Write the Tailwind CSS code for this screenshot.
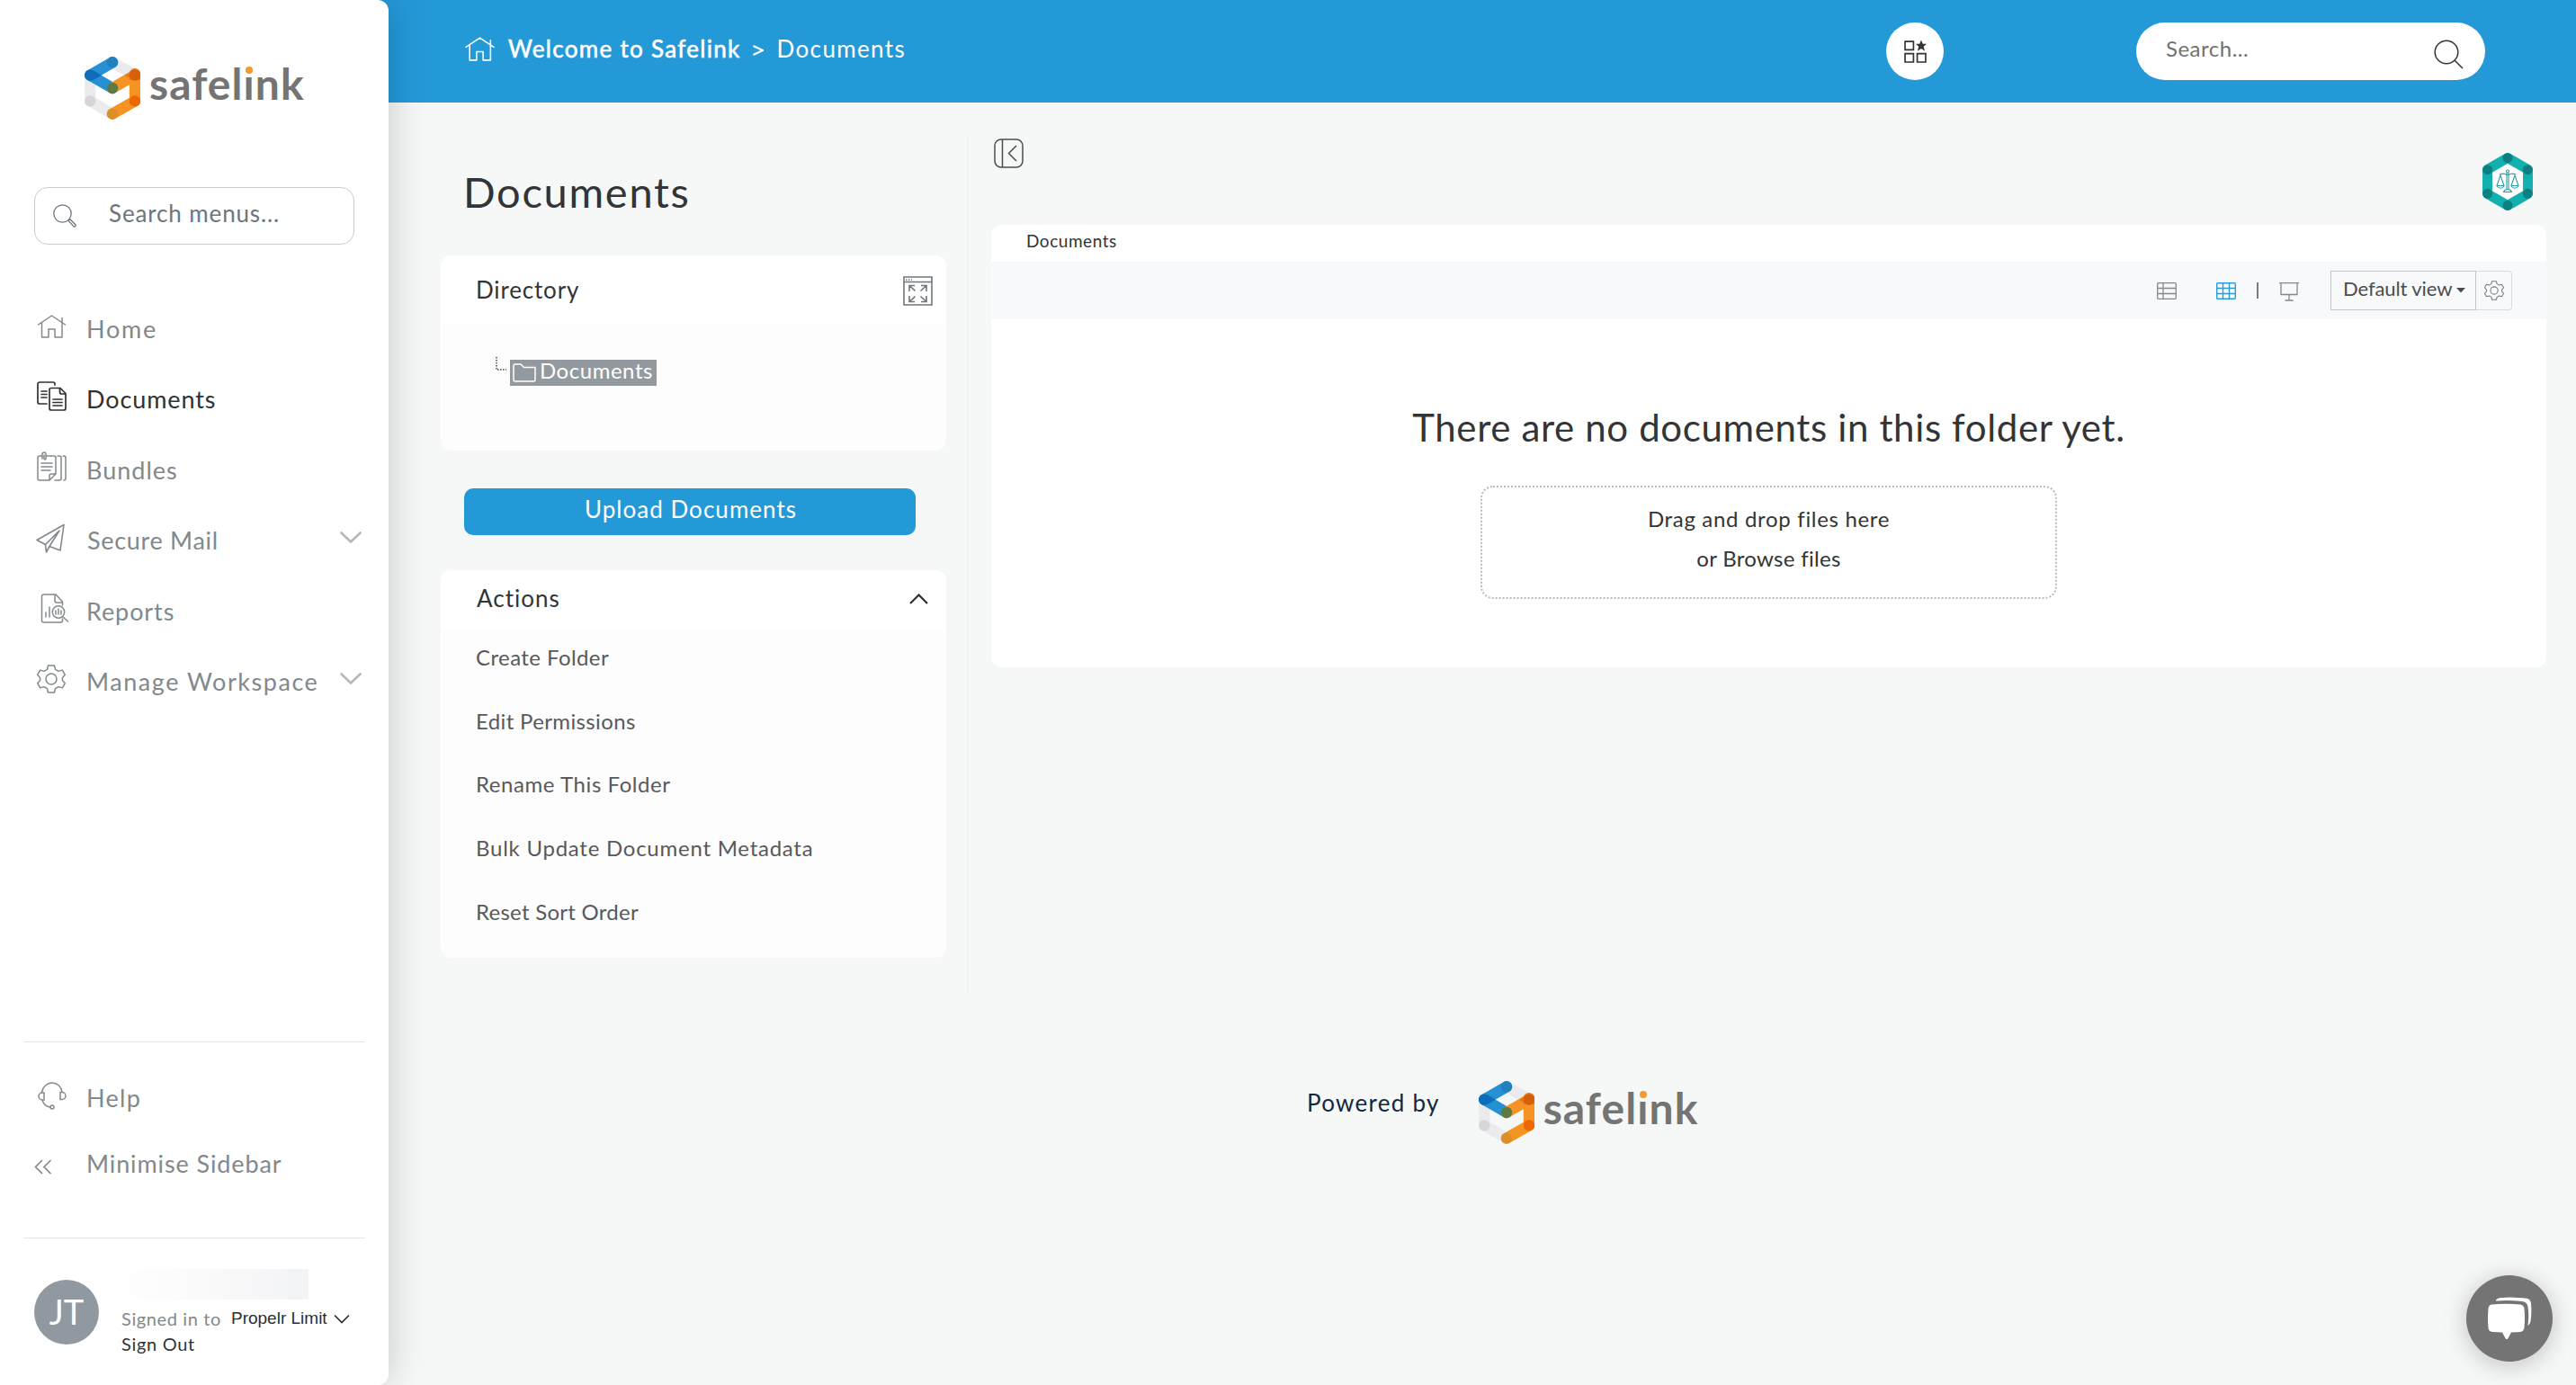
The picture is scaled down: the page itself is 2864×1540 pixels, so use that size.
<!DOCTYPE html>
<html lang="en">
<head>
<meta charset="utf-8">
<title>Documents - Safelink</title>
<script src="https://cdn.jsdelivr.net/npm/@tailwindcss/browser@4"></script>
</head>
<body class="flex h-[1540px] w-[2864px] overflow-hidden bg-[#f6f8f8] font-['Lato',sans-serif] text-[#333436]">
<svg class="hidden">
  <symbol id="mark" viewBox="0 0 62 70">
    <g fill="none" stroke-width="12.4" stroke-linecap="round">
      <g stroke="#ebebed"><path d="M31 6.3L56 20.6"/><path d="M6.3 20.6V49.4"/><path d="M6.3 49.4L31 63.6"/></g>
      <path d="M31 6.3L6.3 20.6L31 35" stroke="#2590d3" stroke-linejoin="round"/>
      <path d="M31 35L56 20.6V49.4L31 63.6" stroke="#f59425" stroke-linejoin="round"/>
    </g>
    <circle cx="31" cy="6.3" r="6.2" fill="#2280bc"/>
    <path d="M0.4 18.5a6.2 6.2 0 0 1 5.9-4.1c3 0 8 3.500 12.500 6.200c-4 2.500-9 6.200-12.500 6.200a6.200 6.200 0 0 1-5.900-8.300z" fill="#0d6db8"/>
    <circle cx="31" cy="35" r="6.2" fill="#5c7a42"/>
    <path d="M50 17.500a6.300 6.300 0 0 1 12.200 3.100V26l-12.400 0V24l-5-3z" fill="#e87a16"/>
    <circle cx="56" cy="20.600" r="6.200" fill="#d65f08"/>
    <circle cx="56" cy="49.400" r="6.200" fill="#ed6800"/>
    <circle cx="31" cy="63.600" r="6.200" fill="#dd8f27"/>
    <circle cx="6.300" cy="49.400" r="6.200" fill="#d6d6d8"/>
  </symbol>
  <symbol id="house" viewBox="0 0 32 26">
    <path d="M1 11L16 1L31 11M5 9V25H12.500V16H19.500V25H27.500V3.500" fill="none" stroke="currentColor" stroke-width="1.500" stroke-linejoin="round" stroke-linecap="round"/>
  </symbol>
  <symbol id="gear" viewBox="0 0 32 32">
    <g fill="none" stroke="currentColor" stroke-width="1.500" stroke-linejoin="round">
      <path d="M12.500 1h7l1 4.300l3.600 2.100l4.200-1.300l3 5.200l-2 2.200a3.500 3.500 0 0 0 0 5l2 2.200l-3 5.200l-4.200-1.300l-3.600 2.100l-1 4.300h-7l-1-4.300l-3.600-2.100l-4.200 1.300l-3-5.200l2-2.200a3.500 3.500 0 0 0 0-5l-2-2.200l3-5.200l4.200 1.300l3.600-2.100z"/>
      <circle cx="16" cy="16" r="6"/>
    </g>
  </symbol>
</svg>

<aside class="relative z-10 flex h-full w-[432px] shrink-0 flex-col rounded-r-[12px] bg-white shadow-[0_0_44px_rgba(0,0,0,0.2)]">
  <div class="mt-[63px] flex h-[70px] pl-[94px]">
    <svg class="h-[70px] w-[62px]"><use href="#mark"/></svg>
    <span class="relative ml-[10px] h-[60px] text-[48px] leading-[60px] font-bold tracking-[1.08px] text-[#747474]">safel&#305;nk<i class="absolute top-[11px] left-[107px] size-[8px] rounded-full bg-[#f29a2e]"></i></span>
  </div>

  <div class="mt-[75px] ml-[38px] flex h-16 w-[356px] items-center rounded-[15px] border border-[#c9cccf] pl-5 text-[#6c757d]">
    <svg class="mt-[-1px] size-[26px]" viewBox="0 0 26 26" fill="none" stroke="currentColor" stroke-width="1.300"><circle cx="10.500" cy="10.500" r="9.700"/><path d="M17 18.500l1.800-1.800l6 6a1.300 1.300 0 0 1-1.900 1.900z"/></svg>
    <span class="mb-[5px] ml-[36px] text-[26px] tracking-[0.87px]">Search menus...</span>
  </div>

  <nav class="mt-[55px] flex flex-col text-[27px] text-[#82898c]">
    <a class="flex h-[78.400px] items-center pl-[41px]"><svg class="mb-[6px] h-[26px] w-[33px]"><use href="#house"/></svg><span class="ml-[22px] tracking-[1.800px]">Home</span></a>
    <a class="flex h-[78.400px] items-center pl-[41px] text-[#2f3133]"><svg class="mb-[8px] size-[33px]" viewBox="0 0 33 33" fill="none" stroke="currentColor" stroke-width="1.700" stroke-linejoin="round" stroke-linecap="round"><path d="M20 4V3a2 2 0 0 0-2-2H3a2 2 0 0 0-2 2V23a2 2 0 0 0 2 2H11M5 11h6M5 14.500h6M5 18h6M16 7.500H26l6 6V30a2 2 0 0 1-2 2H16a2 2 0 0 1-2-2V9.500a2 2 0 0 1 2-2zM25.500 8v4a2 2 0 0 0 2 2H32M18 20h10M18 23.500h10M18 27h10"/></svg><span class="ml-[22px] tracking-[0.900px]">Documents</span></a>
    <a class="flex h-[78.400px] items-center pl-[41px]"><svg class="mb-[8px] size-[33px]" viewBox="0 0 33 33" fill="none" stroke="currentColor" stroke-width="1.500" stroke-linejoin="round" stroke-linecap="round"><path d="M5 5H3a2 2 0 0 0-2 2V30a2 2 0 0 0 2 2H14l7-7V7a2 2 0 0 0-2-2H10M14 32V27a2 2 0 0 1 2-2h5M6 8V3a2 2 0 0 1 4 0V8a1 1 0 0 1-2 0V4M5 13h12M5 17h12M5 21h10M23 5h2a2 2 0 0 1 2 2V30a2 2 0 0 1-2 2H20M29 5h1a2 2 0 0 1 2 2V30a2 2 0 0 1-2 2"/></svg><span class="ml-[22px] tracking-[1px]">Bundles</span></a>
    <a class="flex h-[78.400px] items-center pl-[40px]"><svg class="mb-[6px] size-[33px]" viewBox="0 0 33 33" fill="none" stroke="currentColor" stroke-width="1.600" stroke-linejoin="round"><path d="M1 18.500L31 1.500L27 30L15 25.500L26 8L10.500 23.500zM10.500 23.500L11.500 32L15 25.500"/></svg><span class="ml-[24px] tracking-[0.700px]">Secure Mail</span><svg class="mb-[6px] ml-auto mr-[30px] h-[14px] w-[24px]" viewBox="0 0 24 14" fill="none" stroke="#b4b8bb" stroke-width="2.600" stroke-linecap="round"><path d="M1.500 1.500L12 11.500L22.500 1.500"/></svg></a>
    <a class="flex h-[78.400px] items-center pl-[45px]"><svg class="mb-[7px] h-[33px] w-[32px]" viewBox="0 0 32 33" fill="none" stroke="currentColor" stroke-width="1.500" stroke-linejoin="round" stroke-linecap="round"><path d="M24.500 13V9L17 1H3.500a2 2 0 0 0-2 2V30a2 2 0 0 0 2 2H22.500a2 2 0 0 0 2-2V28M16 1.500V8a2 2 0 0 0 2 2h6M6 21v5M10 15v11M17 19v4M20 17v6M23 19v4M25 26l5.500 5"/><circle cx="20" cy="20.500" r="6.700"/></svg><span class="ml-[19px] tracking-[0.900px]">Reports</span></a>
    <a class="flex h-[78.400px] items-center pl-[41px]"><svg class="mb-[6px] size-[32px]"><use href="#gear"/></svg><span class="ml-[23px] tracking-[1.550px] whitespace-nowrap">Manage Workspace</span><svg class="mb-[6px] ml-auto mr-[30px] h-[14px] w-[24px]" viewBox="0 0 24 14" fill="none" stroke="#b4b8bb" stroke-width="2.600" stroke-linecap="round"><path d="M1.500 1.500L12 11.500L22.500 1.500"/></svg></a>
  </nav>

  <div class="mx-[26px] mt-auto h-[219px] border-y border-[#e3e5e7] pt-[26px] text-[27px] text-[#82898c]">
    <a class="flex h-[73px] items-center pl-[15px]"><svg class="mb-[7px] h-[31px] w-[33px]" viewBox="0 0 33 31" fill="none" stroke="currentColor" stroke-width="1.500" stroke-linecap="round"><path d="M5.500 11C7 5 11.500 1 17 1S27 5 28 11M8 12v8H6a4 4 0 0 1 0-8zM26 11.500v8h2a4 4 0 0 0 0-8zM6 20.500c1.500 4 4.500 7 8.500 7.500"/><circle cx="17" cy="28" r="2"/></svg><span class="ml-[22px] tracking-[1.300px]">Help</span></a>
    <a class="flex h-[73px] items-center pl-[12px]"><svg class="mt-[6px] h-[17px] w-[20px]" viewBox="0 0 20 17" fill="none" stroke="currentColor" stroke-width="1.700"><path d="M9 1L1.500 8.500L9 16M18.500 1L11 8.500L18.500 16"/></svg><span class="ml-[38px] tracking-[0.900px]">Minimise Sidebar</span></a>
  </div>

  <div class="flex h-[163px] shrink-0 pl-[38px]">
    <div class="mt-[46px] flex size-[72px] items-center justify-center rounded-full bg-[#9199a0] pb-[2px] text-[38px] text-white">JT</div>
    <div class="mt-[34px] ml-[13px]">
      <div class="h-[34px] w-[220px] bg-linear-to-r from-white via-[#fafafb] to-[#f2f3f5]"></div>
      <div class="mt-[7px] flex h-7 items-center pl-[12px] text-[20px] tracking-[0.620px] text-[#82898c]">Signed in to<span class="ml-[11px] w-[107px] overflow-hidden font-['Liberation_Sans',sans-serif] text-[19px] tracking-normal whitespace-nowrap text-[#2d2f31]">Propelr Limit</span><svg class="ml-[7px] h-[11px] w-[18px]" viewBox="0 0 18 11" fill="none" stroke="#2d2f31" stroke-width="1.700"><path d="M1 1.500L9 9.500L17 1.500"/></svg></div>
      <div class="flex h-7 items-center pl-[12px] text-[20px] tracking-[0.680px]">Sign Out</div>
    </div>
  </div>
</aside>

<div class="flex min-w-0 flex-1 flex-col">
  <header class="-ml-4 flex h-[114px] shrink-0 bg-[#2499d8] pt-[25px] pl-[101px] text-white">
    <div class="flex h-[59px] items-center text-[26px]">
      <svg class="h-[27px] w-[33px]"><use href="#house"/></svg>
      <span class="ml-[15px] [-webkit-text-stroke:0.6px_white] tracking-[1.300px]">Welcome to Safelink</span>
      <svg class="ml-[13px] mt-[2px] h-[12px] w-[12px]" viewBox="0 0 12 12" fill="none" stroke="white" stroke-width="2"><path d="M0.500 1L11 6L0.500 11"/></svg>
      <span class="ml-[15px] tracking-[1.370px]">Documents</span>
    </div>
    <div class="ml-auto flex size-16 items-center justify-center rounded-full bg-white text-[#303234]">
      <svg class="size-[25px]" viewBox="0 0 24 24" fill="none" stroke="currentColor" stroke-width="1.600"><path d="M1 1h9v9H1zM1 14h9v9H1zM14 14h9v9h-9z"/><path d="M18.200 -0.500l1.700 4h4.100l-3.200 2.900l1.300 4.900l-3.900-2.700l-3.900 2.700l1.300-4.900l-3.200-2.900h4.100z" fill="currentColor" stroke="none"/></svg>
    </div>
    <div class="mr-[101px] ml-[214px] flex h-16 w-[388px] justify-between rounded-full bg-white pr-[24px] pl-[33px]">
      <span class="pt-[14px] text-[24px] leading-[29px] tracking-[0.500px] text-[#6f7173]">Search...</span>
      <svg class="mt-[19px] size-[33px]" viewBox="0 0 33 33" fill="none" stroke="#333" stroke-width="1.500"><circle cx="14" cy="14" r="12.800"/><path d="M23 23L32 32"/></svg>
    </div>
  </header>

  <div class="flex h-[990px] pl-[58px]">
    <section class="w-[562px]">
      <h1 class="flex h-[170px] items-center pt-7 pl-[25px] text-[47px] tracking-[1.700px]">Documents</h1>
      <div class="h-[217px] overflow-hidden rounded-[12px] bg-[#fdfdfd]">
        <div class="flex h-[76px] items-center justify-between bg-white pr-[15px] pl-[39px]">
          <span class="mt-px text-[26px] tracking-[0.840px]">Directory</span>
          <svg class="mt-[2px] h-[33px] w-[33px]" viewBox="0 0 33 33" fill="none" stroke="#6f767a" stroke-width="1.600"><path d="M1 1h31v31H1zM1 6.500h31M7 17v-6.500h6M7 10.500l6.500 6M20 10.500h6V17M26 10.500l-6.500 6M7 22v6.500h6M7 28.500l6.500-6M20 28.500h6V22M26 28.500l-6.500-6"/><path d="M3 4h7" stroke-dasharray="1.500 1.500"/></svg>
        </div>
        <div class="flex pt-[37px] pl-[61px]">
          <svg class="h-[15px] w-[12px]" viewBox="0 0 12 15" fill="none" stroke="#4a4c4e" stroke-width="1.600" stroke-dasharray="1.600 1.400"><path d="M1 0V14H12"/></svg>
          <div class="mt-[3px] ml-[4px] flex h-[29px] w-[163px] items-center bg-[#929a9f] pl-[3px] text-white">
            <svg class="h-[21px] w-[26px]" viewBox="0 0 26 21" fill="none" stroke="white" stroke-width="1.500" stroke-linejoin="round"><path d="M1 2.500A1.500 1.500 0 0 1 2.500 1H9l3.500 3.500H25V18.500A1.500 1.500 0 0 1 23.500 20H2.500A1.500 1.500 0 0 1 1 18.500z"/></svg>
            <span class="mb-[6px] ml-[4px] text-[24px] leading-[29px] tracking-[0.530px]">Documents</span>
          </div>
        </div>
      </div>
      <button class="mt-[42px] ml-[26px] flex h-[52px] w-[502px] items-center justify-center rounded-[10px] bg-[#2499d8] pb-[5px] pl-[2px] text-[26px] tracking-[1.040px] text-white">Upload Documents</button>
      <div class="mt-[39px] h-[431px] overflow-hidden rounded-[12px] bg-[#fdfdfd]">
        <div class="flex h-[66px] items-center justify-between bg-white pr-[20px] pb-[3px] pl-[40px]">
          <span class="text-[26px] tracking-[1.010px]">Actions</span>
          <svg class="h-[12px] w-[21px]" viewBox="0 0 21 12" fill="none" stroke="#2d2f31" stroke-width="2.200"><path d="M1 11L10.500 1.500L20 11"/></svg>
        </div>
        <ul class="pl-[39px] text-[24px] text-[#58595b]">
          <li class="flex h-[62px] items-center tracking-[0.420px]">Create Folder</li>
          <li class="flex h-[79px] items-center tracking-[0.360px]">Edit Permissions</li>
          <li class="flex h-[62px] items-center tracking-[0.570px]">Rename This Folder</li>
          <li class="flex h-[79px] items-center tracking-[0.750px]">Bulk Update Document Metadata</li>
          <li class="flex h-[63px] items-center tracking-[0.260px]">Reset Sort Order</li>
        </ul>
      </div>
    </section>
    <div class="mt-9 ml-6 h-[954px] w-[2px] border-l border-[#eceeee] bg-[#fafbfb]"></div>
    <main class="ml-6 w-[1729px]">
      <div class="flex h-[136px] justify-between pr-[15px] pl-[3px]">
        <svg class="mt-10 size-[33px]" viewBox="0 0 33 33" fill="none" stroke="#4a4c4e" stroke-width="1.500"><rect x="1" y="1" width="31" height="31" rx="7"/><path d="M9.500 1V32M25 8L16.500 16.500L25 25"/></svg>
        <svg class="mt-14 h-[64px] w-[56px]" viewBox="0 0 56 64"><path d="M28 5.500L50.500 18.500V45.500L28 58.500L5.500 45.500V18.500z" fill="#fff" stroke="#12b0ae" stroke-width="11" stroke-linejoin="round"/><g fill="#0d7f80"><circle cx="28" cy="5.700" r="5.500"/><circle cx="50.300" cy="18.700" r="5.500"/><circle cx="50.300" cy="45.300" r="5.500"/><circle cx="28" cy="58.300" r="5.500"/><circle cx="5.700" cy="45.300" r="5.500"/><circle cx="5.700" cy="18.700" r="5.500"/></g><g fill="none" stroke="#2b9fa6" stroke-width="1.100"><path d="M19 24Q24 22 27 24.500h2Q32 22 37 24M20 25l-4 11.500h8zM36 25l-4 11.500h8zM16 37q4 4.500 8 0M32 37q4 4.500 8 0M27 22v18M29 22v18M23.500 43.500q1-3 4.500-3t4.500 3z"/><circle cx="28" cy="20.500" r="1.500"/></g></svg>
      </div>
      <div class="h-[492px] overflow-hidden rounded-[12px] bg-white">
        <div class="flex h-[41px] items-center pb-[4px] pl-[39px] text-[19px] tracking-[0.540px]">Documents</div>
        <div class="flex h-16 items-center bg-[#f8f9fb] pr-[38px] pl-[1296px] text-[#85898c]">
          <svg class="h-[19px] w-[22px]" viewBox="0 0 22 19" fill="none" stroke="currentColor" stroke-width="1.300"><rect x="0.700" y="0.700" width="20.600" height="17.600" rx="1"/><path d="M0.700 6.500h20.600M0.700 12.500h20.600M7 0.700v17.600"/></svg>
          <svg class="ml-[44px] h-[19px] w-[22px]" viewBox="0 0 22 19" fill="none" stroke="#2d9bd4" stroke-width="1.400"><rect x="0.700" y="0.700" width="20.600" height="17.600" rx="1"/><path d="M0.700 6.500h20.600M0.700 12.500h20.600M7.500 0.700v17.600M14.500 0.700v17.600"/></svg>
          <div class="ml-[23px] h-[18px] w-[2px] bg-[#7a7d7f]"></div>
          <svg class="mt-[2px] ml-[23px] h-[21px] w-[22px]" viewBox="0 0 22 21" fill="none" stroke="currentColor" stroke-width="1.300"><path d="M0 0.700h22M2 0.700V13.500H20V0.700M11 13.500V20M6.500 20h9"/></svg>
          <div class="mb-[1px] ml-auto flex h-11 text-[#4b4d4f]">
            <div class="flex w-[162px] items-center border border-[#c4c7ca] pb-[4px] pl-[13px] text-[22px] tracking-[-0.100px] whitespace-nowrap">Default view<svg class="mt-[5px] ml-[5px] h-[6px] w-[10px] shrink-0" viewBox="0 0 10 6"><path d="M0 0h10L5 5.500z" fill="#4b4d4f"/></svg></div>
            <div class="flex w-[40px] items-center justify-center rounded-r-[4px] border border-l-0 border-[#d9dcdf] text-[#75797c]"><svg class="mt-px size-[22px]"><use href="#gear"/></svg></div>
          </div>
        </div>
        <h2 class="mt-[94px] text-center text-[42px] leading-[52px] tracking-[0.640px]">There are no documents in this folder yet.</h2>
        <div class="mx-auto mt-[39px] h-[126px] w-[641px] rounded-[14px] border-2 border-dotted border-[#b8bbbd] pt-[13px] text-center text-[24px] leading-[44px]">
          <p class="tracking-[0.680px]">Drag and drop files here</p>
          <p class="tracking-[0.320px]">or Browse files</p>
        </div>
      </div>
    </main>
  </div>

  <footer class="mt-[98px] flex h-[70px] pl-[1021px]">
    <span class="mt-[8px] text-[26px] leading-[33px] tracking-[1.270px] text-[#14273d]">Powered by</span>
    <svg class="ml-[43px] h-[70px] w-[62px]"><use href="#mark"/></svg>
    <span class="relative ml-[10px] h-[60px] text-[48px] leading-[60px] font-bold tracking-[1.080px] text-[#747474]">safel&#305;nk<i class="absolute top-[11px] left-[107px] size-[8px] rounded-full bg-[#f29a2e]"></i></span>
  </footer>
</div>

<div class="absolute top-[1418px] left-[2742px] flex size-24 items-center justify-center rounded-full bg-[#747474] shadow-[0_4px_28px_rgba(0,0,0,0.22)]">
  <svg class="h-[48px] w-[50px]" viewBox="0 0 50 48" fill="white"><path d="M5 8.500Q21 7 37 8.500Q41 9 41.500 13Q42.500 23 41.500 34Q41 38.500 37 39L27 39.500L23.500 46Q22 48.500 20.500 46L17 39.500L6 39Q2 38.500 1.500 34.500Q0.500 24 1.500 13Q2 9 5 8.500z"/><path d="M10 3.500Q12 1 15 1Q29 0 43 1.500Q48.500 2 49 7.500Q50 18 48.500 27Q48 30.500 45.500 32Q47 20 45.500 11Q44.500 5.500 39 5Q24 3.500 10 4.500z"/></svg>
</div>
</body>
</html>
